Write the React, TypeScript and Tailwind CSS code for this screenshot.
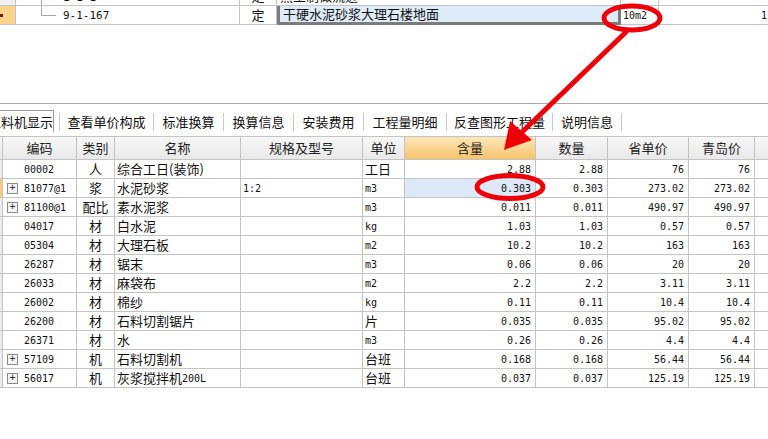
import React from 'react';

const cjk = '"Noto Sans CJK SC", "Noto Sans", sans-serif';
const mono = '"DejaVu Sans Mono", "Noto Sans CJK SC", monospace';

type Row = {
  code: string;
  kind: string;
  name: string;
  spec: string;
  unit: string;
  qty: string;
  amount: string;
  price: string;
  local: string;
  plus?: boolean;
  sel?: boolean;
};

const ROWS: Row[] = [
  { code: '00002', kind: '人', name: '综合工日(装饰)', spec: '', unit: '工日', qty: '2.88', amount: '2.88', price: '76', local: '76' },
  { code: '81077@1', kind: '浆', name: '水泥砂浆', spec: '1:2', unit: 'm3', qty: '0.303', amount: '0.303', price: '273.02', local: '273.02', plus: true, sel: true },
  { code: '81100@1', kind: '配比', name: '素水泥浆', spec: '', unit: 'm3', qty: '0.011', amount: '0.011', price: '490.97', local: '490.97', plus: true },
  { code: '04017', kind: '材', name: '白水泥', spec: '', unit: 'kg', qty: '1.03', amount: '1.03', price: '0.57', local: '0.57' },
  { code: '05304', kind: '材', name: '大理石板', spec: '', unit: 'm2', qty: '10.2', amount: '10.2', price: '163', local: '163' },
  { code: '26287', kind: '材', name: '锯末', spec: '', unit: 'm3', qty: '0.06', amount: '0.06', price: '20', local: '20' },
  { code: '26033', kind: '材', name: '麻袋布', spec: '', unit: 'm2', qty: '2.2', amount: '2.2', price: '3.11', local: '3.11' },
  { code: '26002', kind: '材', name: '棉纱', spec: '', unit: 'kg', qty: '0.11', amount: '0.11', price: '10.4', local: '10.4' },
  { code: '26200', kind: '材', name: '石料切割锯片', spec: '', unit: '片', qty: '0.035', amount: '0.035', price: '95.02', local: '95.02' },
  { code: '26371', kind: '材', name: '水', spec: '', unit: 'm3', qty: '0.26', amount: '0.26', price: '4.4', local: '4.4' },
  { code: '57109', kind: '机', name: '石料切割机', spec: '', unit: '台班', qty: '0.168', amount: '0.168', price: '56.44', local: '56.44', plus: true },
  { code: '56017', kind: '机', name: '灰浆搅拌机200L', spec: '', unit: '台班', qty: '0.037', amount: '0.037', price: '125.19', local: '125.19', plus: true },
];

const TABS = [
  { label: '查看单价构成', w: 'w-[94px]' },
  { label: '标准换算', w: 'w-[70px]' },
  { label: '换算信息', w: 'w-[70px]' },
  { label: '安装费用', w: 'w-[70px]' },
  { label: '工程量明细', w: 'w-[83px]' },
  { label: '反查图形工程量', w: 'w-[106px]' },
  { label: '说明信息', w: 'w-[69px]' },
];

const cols = 'grid grid-cols-[3px_74px_38px_126px_122px_42px_131px_72px_81px_66px_1fr]';
const cell = 'border-r border-b border-[#c4c4c4] h-[19px] flex items-center overflow-hidden whitespace-nowrap';
const hcell = 'border-r border-b border-[#c4c4c4] h-[23px] flex items-center justify-center bg-gradient-to-b from-[#f7f7f7] to-[#e9e9e9] text-[13px] text-[#222]';

function PlusBox() {
  return (
    <span className="w-[11px] h-[11px] border border-[#8a8a8a] bg-[#f4f4f4] flex items-center justify-center text-[10px] leading-none text-[#333] mr-[6px] shrink-0" style={{ fontFamily: mono }}>
      +
    </span>
  );
}

function Annotation() {
  return (
    <svg className="absolute left-0 top-0 pointer-events-none" width="768" height="439">
      <ellipse cx="632" cy="18" rx="28" ry="12" fill="none" stroke="#ee0008" strokeWidth="5" />
      <ellipse cx="510" cy="187" rx="33" ry="11.5" fill="none" stroke="#ee0008" strokeWidth="5" />
      <line x1="626" y1="32" x2="520" y2="134" stroke="#ee0008" strokeWidth="5" strokeLinecap="round" />
      <polygon points="504,150 510,121 532,140" fill="#ee0008" />
    </svg>
  );
}

export default function App() {
  return (
    <div className="relative w-[768px] h-[439px] bg-white overflow-hidden text-[#111]" style={{ fontFamily: cjk }}>
      {/* upper grid (item list) */}
      <div className="mt-[-13px]">
        <div className="flex h-[19px] border-b border-[#c4c4c4] text-[13px]">
          <div className="w-[16px] border-r border-[#c4c4c4] bg-[#f0f0f0]" />
          <div className="w-[224px] border-r border-[#c4c4c4] relative">
            <div className="absolute left-[25px] top-0 h-full border-l border-[#a8a8a8]" />
            <span className="absolute left-[47px] top-[3px] text-[11px]" style={{ fontFamily: mono }}>1-1-1</span>
          </div>
          <div className="w-[37px] border-r border-[#c4c4c4] flex items-center justify-center">定</div>
          <div className="w-[344px] border-r border-[#c4c4c4] px-[3px] flex items-center">黑土制做流进</div>
          <div className="w-[38px] border-r border-[#c4c4c4] px-[2px] flex items-center text-[10px]" style={{ fontFamily: mono }}>10m2</div>
          <div className="flex-1 flex items-center justify-end text-[10px] pr-[1px]" style={{ fontFamily: mono }}>1</div>
        </div>
        <div className="flex h-[19px] border-b border-[#c4c4c4] text-[13px]">
          <div className="w-[16px] border-r border-[#c4c4c4] bg-[#fcd48c] relative">
            <div className="absolute left-0 top-[8px] w-[3px] h-[3px] bg-[#7a1a10]" />
          </div>
          <div className="w-[224px] border-r border-[#c4c4c4] relative">
            <div className="absolute left-[25px] top-0 h-[9px] border-l border-[#a8a8a8]" />
            <div className="absolute left-[25px] top-[9px] w-[15px] border-t border-[#a8a8a8]" />
            <span className="absolute left-[47px] top-[2px] text-[11px]" style={{ fontFamily: mono }}>9-1-167</span>
          </div>
          <div className="w-[37px] border-r border-[#c4c4c4] flex items-center justify-center">定</div>
          <div className="w-[344px] border-l-[3px] border-r-[3px] border-b-[3px] border-[#7c7c7c] bg-[#deebf8] px-[3px] flex items-center -mb-px">干硬水泥砂浆大理石楼地面</div>
          <div className="w-[38px] border-r border-[#c4c4c4] px-[2px] flex items-center text-[10px]" style={{ fontFamily: mono }}>10m2</div>
          <div className="flex-1 flex items-center justify-end text-[10px] pr-[1px]" style={{ fontFamily: mono }}>1</div>
        </div>
      </div>

      <div className="h-[78px]" />

      {/* tab strip */}
      <div className="border-t border-[#a9a9a9] h-[33px] flex items-end bg-white">
        <div className="h-[22px] w-[54px] border-t border-r border-[#9a9a9a] bg-white flex items-center overflow-hidden mb-[4px]">
          <span className="ml-[-12px] text-[13px] whitespace-nowrap">工料机显示</span>
        </div>
        <div className="w-[5px]" />
        {TABS.map((t) => (
          <div key={t.label} className={`${t.w} h-[18px] mb-[5px] border-l border-[#c8c8c8] flex items-center justify-center text-[13px] whitespace-nowrap`}>
            {t.label}
          </div>
        ))}
        <div className="h-[18px] mb-[5px] border-l border-[#c8c8c8]" />
      </div>

      {/* material grid */}
      <div className="border-t border-[#c4c4c4]">
        <div className={cols}>
          <div className={hcell} />
          <div className={hcell}>编码</div>
          <div className={hcell}>类别</div>
          <div className={hcell}>名称</div>
          <div className={hcell}>规格及型号</div>
          <div className={hcell}>单位</div>
          <div className="border-r border-b border-[#c4c4c4] h-[23px] flex items-center justify-center bg-gradient-to-b from-[#fde7b8] to-[#f6c36a] text-[13px] text-[#222]">含量</div>
          <div className={hcell}>数量</div>
          <div className={hcell}>省单价</div>
          <div className={hcell}>青岛价</div>
          <div className="border-b border-[#c4c4c4] h-[23px] bg-gradient-to-b from-[#f7f7f7] to-[#e9e9e9]" />
        </div>
        {ROWS.map((r) => (
          <div key={r.code} className={cols}>
            <div className={`${cell} ${r.sel ? 'bg-[#f8c978]' : 'bg-[#ececec]'}`} />
            <div className={`${cell} pl-[4px] text-[10px]`} style={{ fontFamily: mono }}>
              {r.plus ? <PlusBox /> : <span className="w-[17px] shrink-0" />}
              {r.code}
            </div>
            <div className={`${cell} justify-center text-[13px]`}>{r.kind}</div>
            <div className={`${cell} pl-[2px] text-[13px]`}>
              {r.name.endsWith('200L') ? (
                <>
                  {r.name.slice(0, -4)}
                  <span className="text-[10px]" style={{ fontFamily: mono }}>200L</span>
                </>
              ) : (
                r.name
              )}
            </div>
            <div className={`${cell} pl-[2px] text-[10px]`} style={{ fontFamily: mono }}>{r.spec}</div>
            <div className={`${cell} pl-[2px] ${/^[a-z]/.test(r.unit) ? 'text-[10px]' : 'text-[13px]'}`} style={/^[a-z]/.test(r.unit) ? { fontFamily: mono } : undefined}>{r.unit}</div>
            <div className={`${cell} justify-end pr-[4px] text-[10px] ${r.sel ? 'bg-[#dde9f8]' : ''}`} style={{ fontFamily: mono }}>{r.qty}</div>
            <div className={`${cell} justify-end pr-[4px] text-[10px]`} style={{ fontFamily: mono }}>{r.amount}</div>
            <div className={`${cell} justify-end pr-[4px] text-[10px]`} style={{ fontFamily: mono }}>{r.price}</div>
            <div className={`${cell} justify-end pr-[4px] text-[10px]`} style={{ fontFamily: mono }}>{r.local}</div>
            <div className="border-b border-[#c4c4c4] h-[19px]" />
          </div>
        ))}
      </div>

      <Annotation />
    </div>
  );
}
